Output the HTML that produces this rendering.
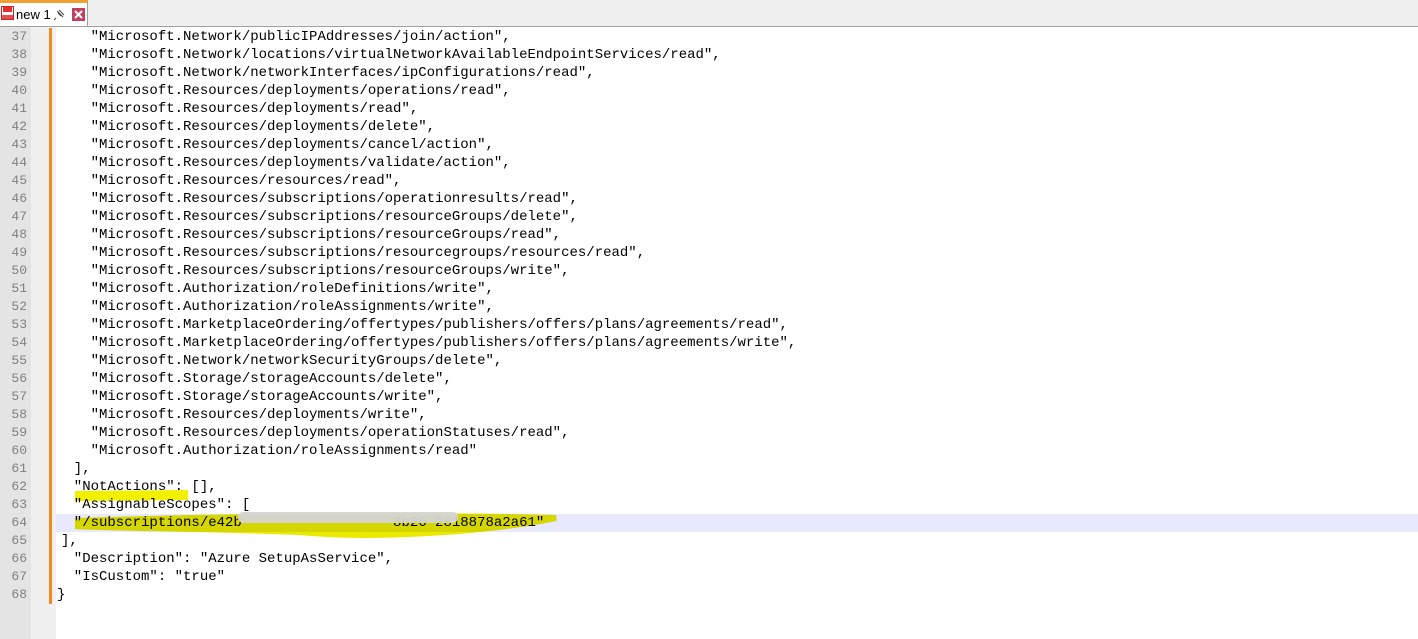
<html><head><style>
body{margin:0;width:1418px;height:639px;background:#fff;position:relative;overflow:hidden;font-family:"Liberation Mono",monospace}
#tabbar{position:absolute;left:0;top:0;width:1418px;height:26px;background:#f0f0f0;border-bottom:1px solid #a0a0a0}
#tab{position:absolute;left:0;top:0;width:88px;height:26px;background:#fff;border-right:1px solid #a0a0a0;border-top:3px solid #f0a030;box-sizing:border-box}
#tab span{position:absolute;left:16px;top:4px;font:13px "Liberation Sans",sans-serif;color:#000}
#gut{position:absolute;left:0;top:27px;width:31px;height:612px;background:#e4e4e4}
#fold{position:absolute;left:31px;top:27px;width:25px;height:612px;background:#f0f0f0}
#bar{position:absolute;left:49px;top:28px;width:3px;height:576px;background:#f08a1c}
.ln{position:absolute;left:0;width:27px;text-align:right;font-size:13px;color:#808080;height:18px;line-height:18px}
.tx{position:absolute;left:57px;font-size:14px;line-height:18px;height:18px;white-space:pre;color:#000}
</style></head><body>
<div id="tabbar"><div id="tab">
<svg style="position:absolute;left:1px;top:3px" width="13" height="14"><rect x="0.5" y="0.5" width="12" height="13" fill="#fff" stroke="#d02020"/><rect x="2" y="1" width="9" height="5" fill="#e03030"/><rect x="1" y="9" width="11" height="4" fill="#e05050"/></svg>
<span>new 1</span>
<svg style="position:absolute;left:53px;top:6px" width="12" height="12"><path d="M4 2l6 6M6 1l5 5M3 9l-2 2M5 4l3 3" stroke="#444" fill="none"/></svg>
<svg style="position:absolute;left:72px;top:5px" width="13" height="13"><rect width="13" height="13" fill="#c04060"/><path d="M3 3l7 7M10 3l-7 7" stroke="#fff" stroke-width="2"/></svg>
</div></div>
<div id="gut"></div><div id="fold"></div>
<div style="position:absolute;left:56px;top:514px;width:1362px;height:18px;background:#e8e8ff"></div>
<div id="bar"></div>
<div id="lines"></div>
<svg style="position:absolute;left:0;top:0;mix-blend-mode:multiply" width="1418" height="639">
<path d="M75 496 L188 495" stroke="#f0f000" stroke-width="10"/>
<path d="M75 521 C200 517 400 514 556 518 C500 530 380 540 300 532 C200 528 100 528 75 526" fill="#eaea00" stroke="#eaea00" stroke-width="6"/>
</svg>
<div style="position:absolute;left:238px;top:512px;width:220px;height:11px;border-radius:5px;background:#d4d4d4;opacity:0.95"></div>
<script>
var L=[
'    "Microsoft.Network/publicIPAddresses/join/action",',
'    "Microsoft.Network/locations/virtualNetworkAvailableEndpointServices/read",',
'    "Microsoft.Network/networkInterfaces/ipConfigurations/read",',
'    "Microsoft.Resources/deployments/operations/read",',
'    "Microsoft.Resources/deployments/read",',
'    "Microsoft.Resources/deployments/delete",',
'    "Microsoft.Resources/deployments/cancel/action",',
'    "Microsoft.Resources/deployments/validate/action",',
'    "Microsoft.Resources/resources/read",',
'    "Microsoft.Resources/subscriptions/operationresults/read",',
'    "Microsoft.Resources/subscriptions/resourceGroups/delete",',
'    "Microsoft.Resources/subscriptions/resourceGroups/read",',
'    "Microsoft.Resources/subscriptions/resourcegroups/resources/read",',
'    "Microsoft.Resources/subscriptions/resourceGroups/write",',
'    "Microsoft.Authorization/roleDefinitions/write",',
'    "Microsoft.Authorization/roleAssignments/write",',
'    "Microsoft.MarketplaceOrdering/offertypes/publishers/offers/plans/agreements/read",',
'    "Microsoft.MarketplaceOrdering/offertypes/publishers/offers/plans/agreements/write",',
'    "Microsoft.Network/networkSecurityGroups/delete",',
'    "Microsoft.Storage/storageAccounts/delete",',
'    "Microsoft.Storage/storageAccounts/write",',
'    "Microsoft.Resources/deployments/write",',
'    "Microsoft.Resources/deployments/operationStatuses/read",',
'    "Microsoft.Authorization/roleAssignments/read"',
'  ],',
'  "NotActions": [],',
'  "AssignableScopes": [',
'  "/subscriptions/e42b                  8b26 2818878a2a61"',
'],',
'  "Description": "Azure SetupAsService",',
'  "IsCustom": "true"',
'}'];
var h='';for(var i=0;i<L.length;i++){var t=28+i*18;var x=(i==28)?61:57;h+='<div class="ln" style="top:'+t+'px">'+(37+i)+'</div><div class="tx" style="left:'+x+'px;top:'+t+'px">'+L[i].replace(/&/g,'&amp;').replace(/</g,'&lt;')+'</div>';}
document.getElementById('lines').innerHTML=h;
</script>
</body></html>
